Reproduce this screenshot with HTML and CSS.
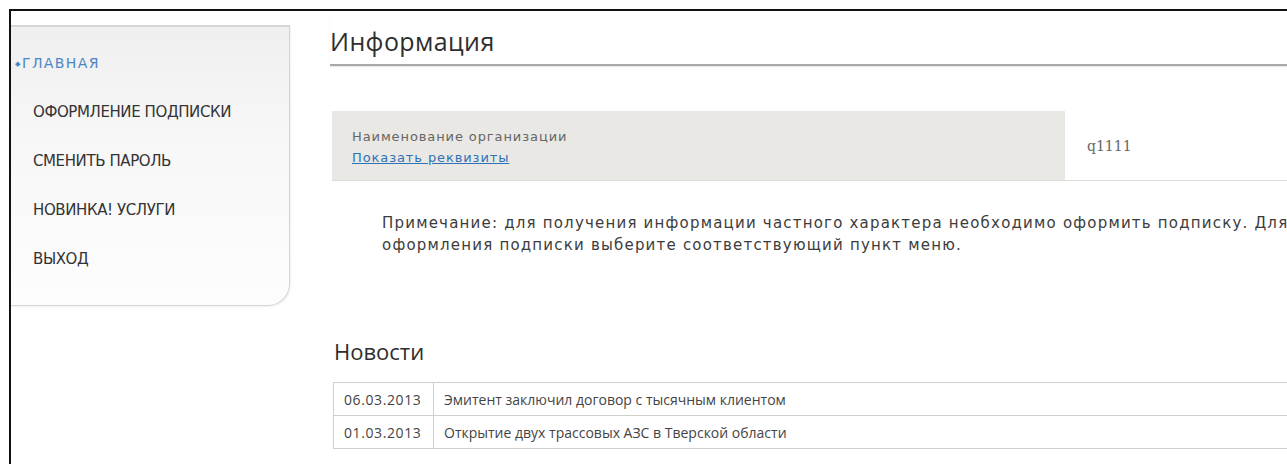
FILE: index.html
```html
<!DOCTYPE html>
<html lang="ru">
<head>
<meta charset="utf-8">
<title>Информация</title>
<link rel="stylesheet" href="styles.css">
</head>
<body>
<div class="frame">
  <aside class="sidebar">
    <ul class="menu">
      <li class="menu-item is-active"><span class="bullet">&#9670;</span>ГЛАВНАЯ</li>
      <li class="menu-item">ОФОРМЛЕНИЕ ПОДПИСКИ</li>
      <li class="menu-item">СМЕНИТЬ ПАРОЛЬ</li>
      <li class="menu-item">НОВИНКА! УСЛУГИ</li>
      <li class="menu-item">ВЫХОД</li>
    </ul>
  </aside>
  <main class="content">
    <h1 class="page-title">Информация</h1>
    <div class="org-row">
      <div class="org-label">
        <div class="org-caption">Наименование организации</div>
        <a class="org-link" href="#">Показать реквизиты</a>
      </div>
      <div class="org-value">q1111</div>
    </div>
    <p class="note">Примечание: для получения информации частного характера необходимо оформить подписку. Для оформления подписки выберите соответствующий пункт меню.</p>
    <h2 class="section-title">Новости</h2>
    <table class="news">
      <tr><td class="news-date">06.03.2013</td><td class="news-text">Эмитент заключил договор с тысячным клиентом</td></tr>
      <tr><td class="news-date">01.03.2013</td><td class="news-text">Открытие двух трассовых АЗС в Тверской области</td></tr>
    </table>
  </main>
</div>
</body>
</html>
```

FILE: styles.css
```css
html, body {
  margin: 0;
  padding: 0;
  background: #fff;
  overflow: hidden;
}

body {
  font-family: "DejaVu Sans", Verdana, sans-serif;
  color: #333;
}

/* page frame: dark rule on the top and left only */
.frame {
  display: flex;
  align-items: flex-start;
  box-sizing: border-box;
  margin: 9px 0 0 9px;
  width: 1278px;
  height: 455px;
  overflow: hidden;
  border-top: 2px solid #111;
  border-left: 2px solid #111;
}

/* left navigation panel */
.sidebar {
  flex: none;
  box-sizing: border-box;
  width: 279px;
  height: 281px;
  margin-top: 14px;
  border: 1px solid #d4d4d4;
  border-left: none;
  border-top: 2px solid #d6d6d2;
  border-bottom-right-radius: 22px;
  background: linear-gradient(to bottom, #efefef 0, #f7f7f7 40%, #fdfdfd 100%);
  box-shadow: 1px 1px 2px rgba(0, 0, 0, 0.06);
}

.menu {
  list-style: none;
  margin: 0;
  padding: 12px 0 0 0;
}

.menu-item {
  height: 49px;
  line-height: 49px;
  padding-left: 22px;
  font-size: 15px;
  letter-spacing: -0.4px;
  color: #333;
  white-space: nowrap;
}

.menu-item.is-active {
  padding-left: 4px;
  font-size: 14px;
  letter-spacing: 1.4px;
  color: #4a87c6;
}

.bullet {
  display: inline-block;
  width: 7px;
  font-size: 7px;
  letter-spacing: 0;
  vertical-align: 2px;
}

/* main column */
.content {
  flex: 1;
  min-width: 0;
  margin-left: 40px;
}

.page-title {
  margin: 0;
  padding: 15px 0 8px 0;
  font-family: "Open Sans", sans-serif;
  font-weight: normal;
  font-size: 25px;
  letter-spacing: 0.4px;
  line-height: 30px;
  color: #2e2e2e;
  border-bottom: 2px solid #a9a9a9;
  box-shadow: 0 1px 1px rgba(0, 0, 0, 0.08);
}

.org-row {
  display: flex;
  margin: 45px 0 0 2px;
  height: 69px;
  border-bottom: 1px solid #dcdcd8;
}

.org-label {
  flex: none;
  box-sizing: border-box;
  width: 733px;
  padding: 15px 0 0 20px;
  background: #e9e8e4;
  font-size: 13px;
  letter-spacing: 0.9px;
  line-height: 21px;
}

.org-caption {
  color: #666;
}

.org-link {
  color: #2f72b8;
  text-decoration: underline;
}

.org-value {
  display: flex;
  align-items: center;
  padding-left: 22px;
  font-family: "DejaVu Serif", serif;
  font-size: 14px;
  color: #666;
}

.note {
  margin: 31px 0 0 0;
  padding-left: 52px;
  width: 912px;
  font-size: 15px;
  letter-spacing: 1.2px;
  line-height: 22px;
  color: #3c3c3c;
}

.section-title {
  margin: 80px 0 0 4px;
  font-family: "Open Sans", sans-serif;
  font-weight: normal;
  font-size: 22px;
  line-height: 30px;
  color: #2e2e2e;
}

.news {
  margin: 16px 0 0 3px;
  width: 1100px;
  border-collapse: collapse;
  border: 1px solid #cfcfcb;
  font-family: "Open Sans", sans-serif;
  font-size: 14px;
  color: #444;
}

.news td {
  height: 32px;
  padding: 0 10px;
  border: 1px solid #cfcfcb;
}

.news-date {
  width: 79px;
  letter-spacing: 0.6px;
}
```
